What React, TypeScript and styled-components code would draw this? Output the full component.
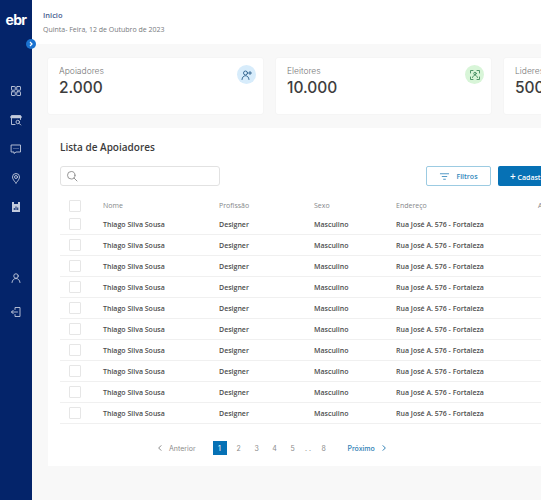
import { ReactNode } from "react";
import styled, { createGlobalStyle } from "styled-components";

const GlobalStyle = createGlobalStyle`
  html, body {
    margin: 0;
    padding: 0;
    width: 541px;
    height: 500px;
    overflow: hidden;
    background: #f8f8f8;
    font-family: "Open Sans", sans-serif;
  }
`;

const rows = Array.from({ length: 10 }, (_, i) => i);
const pages = ["2", "3", "4", "5"];

const Icon = ({ size = 12, weight = 1.8, children }: { size?: number; weight?: number; children: ReactNode }) => (
  <svg
    width={size}
    height={size}
    viewBox="0 0 24 24"
    fill="none"
    stroke="currentColor"
    strokeWidth={weight}
    strokeLinecap="round"
    strokeLinejoin="round"
  >
    {children}
  </svg>
);

function App() {
  return (
    <>
      <GlobalStyle />
      <Page>
        <Sidebar>
          <Logo>ebr</Logo>
          <Toggle>
            <svg width="6" height="6" viewBox="0 0 6 6" fill="none" stroke="#fff" strokeWidth="1.2">
              <path d="M2 1l2 2-2 2" />
            </svg>
          </Toggle>
          <NavTop>
            <NavIcon>
              <Icon>
                <rect x="3" y="3" width="7.5" height="7.5" rx="1" />
                <rect x="13.5" y="3" width="7.5" height="7.5" rx="1" />
                <rect x="3" y="13.5" width="7.5" height="7.5" rx="1" />
                <rect x="13.5" y="13.5" width="7.5" height="7.5" rx="1" />
              </Icon>
            </NavIcon>
            <NavIcon>
              <Icon>
                <path d="M10 21H3V3h18v8" />
                <path d="M3 6h18" strokeWidth="5" />
                <circle cx="15.500" cy="16" r="3.500" />
                <path d="M18.500 19l3 3" />
              </Icon>
            </NavIcon>
            <NavIcon>
              <Icon>
                <path d="M3 4h18v14h-9l-4 3v-3H3z" />
                <path d="M8 11h.01M12 11h.01M16 11h.01" />
              </Icon>
            </NavIcon>
            <NavIcon>
              <Icon>
                <path d="M12 22s-7-6.500-7-12a7 7 0 0 1 14 0c0 5.500-7 12-7 12z" />
                <circle cx="12" cy="10" r="3" />
              </Icon>
            </NavIcon>
            <NavIcon>
              <svg width="12" height="12" viewBox="0 0 24 24" fill="currentColor">
                <path d="M4 2h4v4h8V2h4v20H4z" />
                <path d="M11 11h2v7h-2zM7.500 14h2v4h-2zM14.500 13h2v5h-2z" fill="#04246a" />
              </svg>
            </NavIcon>
          </NavTop>
          <NavBottom>
            <NavIcon>
              <Icon>
                <circle cx="12" cy="8" r="4.500" />
                <path d="M4 21c.6-5 4-8 8-8s7.400 3 8 8" />
              </Icon>
            </NavIcon>
            <NavIcon>
              <Icon>
                <path d="M10 7V3h10v18H10v-4" />
                <path d="M15 12H3M6.500 8.500L3 12l3.500 3.500" />
              </Icon>
            </NavIcon>
          </NavBottom>
        </Sidebar>

        <Main>
          <Header>
            <Crumb>Inicio</Crumb>
            <DateText>Quinta- Feira, 12 de Outubro de 2023</DateText>
          </Header>

          <Content>
            <Cards>
              <Card>
                <CardTexts>
                  <CardLabel>Apoiadores</CardLabel>
                  <CardValue>2.000</CardValue>
                </CardTexts>
                <CardBadge $tone="blue">
                  <Icon>
                    <circle cx="9" cy="8" r="4" />
                    <path d="M2 21c.5-5 3.500-7.500 7-7.500s6.500 2.500 7 7.500" />
                    <path d="M18 5v6M15 8h6" />
                  </Icon>
                </CardBadge>
              </Card>
              <Card>
                <CardTexts>
                  <CardLabel>Eleitores</CardLabel>
                  <CardValue>10.000</CardValue>
                </CardTexts>
                <CardBadge $tone="green">
                  <Icon>
                    <path d="M3 8V3h5M16 3h5v5M21 16v5h-5M8 21H3v-5" />
                    <circle cx="12" cy="9" r="2.500" />
                    <path d="M7 17c1-3 3-4.500 5-4.500s4 1.500 5 4.500" />
                  </Icon>
                </CardBadge>
              </Card>
              <Card>
                <CardTexts>
                  <CardLabel>Lideres</CardLabel>
                  <CardValue>500</CardValue>
                </CardTexts>
              </Card>
            </Cards>

            <Panel>
              <PanelTitle>Lista de Apoiadores</PanelTitle>
              <Toolbar>
                <SearchBox>
                  <Icon size={12}>
                    <circle cx="10.500" cy="10.500" r="7.500" />
                    <path d="M16 16l6 6" />
                  </Icon>
                </SearchBox>
                <ToolbarActions>
                  <FilterButton>
                    <Icon size={11}>
                      <path d="M3 6h18M7 12h10M10 18h4" />
                    </Icon>
                    Filtros
                  </FilterButton>
                  <AddButton>
                    <Plus>+</Plus> Cadastrar
                  </AddButton>
                </ToolbarActions>
              </Toolbar>

              <Table>
                <HeadRow>
                  <Checkbox />
                  <span>Nome</span>
                  <span>Profissão</span>
                  <span>Sexo</span>
                  <span>Endereço</span>
                  <span>Ações</span>
                </HeadRow>
                {rows.map((i) => (
                  <Row key={i}>
                    <Checkbox />
                    <span>Thiago Silva Sousa</span>
                    <span>Designer</span>
                    <span>Masculino</span>
                    <span>Rua José A. 576 - Fortaleza</span>
                    <span />
                  </Row>
                ))}
              </Table>

              <Pagination>
                <PageNav>
                  <Icon size={8} weight={3}>
                    <path d="M15 5l-7 7 7 7" />
                  </Icon>
                  Anterior
                </PageNav>
                <PageList>
                  <PageNumber $active>1</PageNumber>
                  {pages.map((p) => (
                    <PageNumber key={p}>{p}</PageNumber>
                  ))}
                  <Dots>. .</Dots>
                  <PageNumber>8</PageNumber>
                </PageList>
                <PageNav $next>
                  Próximo
                  <Icon size={8} weight={3}>
                    <path d="M9 5l7 7-7 7" />
                  </Icon>
                </PageNav>
              </Pagination>
            </Panel>
          </Content>
        </Main>
      </Page>
    </>
  );
}

export default App;

const Page = styled.div`
  display: flex;
  width: 541px;
  height: 500px;
  overflow: hidden;
`;

const Sidebar = styled.aside`
  position: relative;
  flex: 0 0 32px;
  display: flex;
  flex-direction: column;
  align-items: center;
  background: #04246a;
  color: #c3cbdd;
`;

const Logo = styled.div`
  margin-top: 9px;
  font-family: "Inter", sans-serif;
  font-size: 14px;
  font-weight: 700;
  line-height: 22px;
  letter-spacing: -0.7px;
  color: #fff;
`;

const Toggle = styled.div`
  position: absolute;
  top: 39px;
  left: 26px;
  width: 10px;
  height: 10px;
  border-radius: 50%;
  background: #1a72d0;
  display: flex;
  align-items: center;
  justify-content: center;
`;

const NavTop = styled.nav`
  margin-top: 53px;
  display: flex;
  flex-direction: column;
  gap: 15px;
`;

const NavBottom = styled.nav`
  margin-top: 57px;
  display: flex;
  flex-direction: column;
  gap: 20px;
`;

const NavIcon = styled.div`
  width: 12px;
  height: 14px;
  display: flex;
  align-items: center;
  justify-content: center;
`;

const Main = styled.main`
  flex: 1;
  min-width: 0;
  display: flex;
  flex-direction: column;
`;

const Header = styled.header`
  height: 44px;
  flex: none;
  background: #fff;
  padding: 10px 0 0 11px;
  box-sizing: border-box;
`;

const Crumb = styled.div`
  font-size: 7.500px;
  font-weight: 600;
  line-height: 11px;
  color: #47608f;
`;

const DateText = styled.div`
  margin-top: 3px;
  font-size: 7px;
  line-height: 11px;
  color: #77797d;
`;

const Content = styled.div`
  padding: 14px 0 0 16px;
  display: flex;
  flex-direction: column;
  gap: 14px;
`;

const Cards = styled.div`
  display: flex;
  gap: 13px;
`;

const Card = styled.div`
  flex: 0 0 215px;
  height: 56px;
  box-sizing: border-box;
  padding: 7px 7px 0 11px;
  background: #fff;
  border-radius: 2px;
  box-shadow: 0 0 2px rgba(0, 0, 0, 0.06);
  display: flex;
  justify-content: space-between;
  align-items: flex-start;
`;

const CardTexts = styled.div`
  display: flex;
  flex-direction: column;
`;

const CardLabel = styled.div`
  font-family: "Inter", sans-serif;
  font-size: 8.500px;
  font-weight: 300;
  line-height: 12px;
  color: #767676;
`;

const CardValue = styled.div`
  font-family: "Inter", sans-serif;
  font-size: 15.500px;
  font-weight: 500;
  line-height: 22px;
  color: #3d3d3d;
`;

const CardBadge = styled.div<{ $tone: "blue" | "green" }>`
  width: 19px;
  height: 19px;
  border-radius: 50%;
  display: flex;
  align-items: center;
  justify-content: center;
  background: ${(p) => (p.$tone === "blue" ? "#d7ecfb" : "#d8f5d8")};
  color: ${(p) => (p.$tone === "blue" ? "#2b5f8a" : "#3f8a5c")};
`;

const Panel = styled.section`
  background: #fff;
  width: 520px;
  height: 338px;
  box-sizing: border-box;
  padding: 12px 0 0 12px;
`;

const PanelTitle = styled.h2`
  margin: 0;
  font-size: 10px;
  font-weight: 600;
  line-height: 15px;
  color: #3c3c3c;
`;

const Toolbar = styled.div`
  margin-top: 11px;
  display: flex;
  justify-content: space-between;
  align-items: center;
`;

const SearchBox = styled.div`
  width: 160px;
  height: 20px;
  box-sizing: border-box;
  padding-left: 5px;
  border: 1px solid #e2e2e2;
  border-radius: 3px;
  display: flex;
  align-items: center;
  color: #8a8a8a;
`;

const ToolbarActions = styled.div`
  display: flex;
  gap: 7px;
`;

const FilterButton = styled.button`
  width: 65px;
  height: 20px;
  padding: 0;
  border: 1px solid #9ccbe2;
  border-radius: 2px;
  background: #fff;
  color: #2f86bb;
  font-family: "Open Sans", sans-serif;
  font-size: 7px;
  font-weight: 600;
  display: flex;
  align-items: center;
  justify-content: center;
  gap: 6px;
`;

const AddButton = styled.button`
  width: 70px;
  height: 20px;
  padding: 0 0 0 12px;
  border: 0;
  border-radius: 2px;
  background: #0671b5;
  color: #fff;
  font-family: "Open Sans", sans-serif;
  font-size: 7px;
  font-weight: 600;
  text-align: left;
  white-space: nowrap;
`;

const Plus = styled.span`
  font-size: 10px;
  line-height: 10px;
`;

const Table = styled.div`
  margin-top: 11px;
  display: flex;
  flex-direction: column;
`;

const HeadRow = styled.div`
  display: grid;
  grid-template-columns: 34px 116px 95px 82px 142px 60px;
  align-items: center;
  height: 17px;
  padding-left: 9px;
  font-size: 7px;
  color: #85878a;
  white-space: nowrap;
`;

const Row = styled(HeadRow)`
  height: 21px;
  box-sizing: border-box;
  border-bottom: 1px solid #f0f0f0;
  font-weight: 600;
  color: #4d4d4d;
`;

const Checkbox = styled.div`
  width: 10px;
  height: 10px;
  border: 1px solid #e6e6e6;
  border-radius: 1px;
`;

const Pagination = styled.div`
  margin-top: 17px;
  padding-left: 96px;
  display: flex;
  align-items: center;
  font-family: "Inter", sans-serif;
  font-size: 7px;
  color: #8b8b8b;
`;

const PageNav = styled.div<{ $next?: boolean }>`
  display: flex;
  align-items: center;
  gap: 5px;
  color: ${(p) => (p.$next ? "#2f7fb5" : "#8b8b8b")};
  font-weight: ${(p) => (p.$next ? 500 : 400)};
`;

const PageList = styled.div`
  margin: 0 17px 0 17px;
  display: flex;
  align-items: center;
  gap: 4px;
`;

const PageNumber = styled.div<{ $active?: boolean }>`
  width: 14px;
  height: 14px;
  display: flex;
  align-items: center;
  justify-content: center;
  background: ${(p) => (p.$active ? "#0671b5" : "transparent")};
  color: ${(p) => (p.$active ? "#fff" : "#8b8b8b")};

  &:first-child {
    margin-right: 1px;
  }
`;

const Dots = styled.div`
  width: 9px;
  text-align: center;
  white-space: nowrap;
`;
